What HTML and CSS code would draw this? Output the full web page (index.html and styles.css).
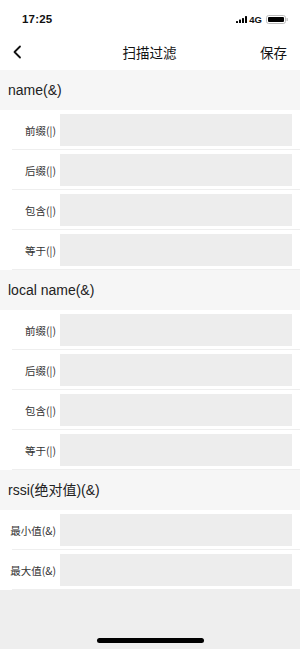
FILE: index.html
```html
<!DOCTYPE html>
<html lang="zh">
<head>
<meta charset="utf-8">
<title>扫描过滤</title>
<link rel="stylesheet" href="styles.css">
</head>
<body>
<div class="page">
  <div class="status">
    <span class="time">17:25</span>
    <span class="status-right">
      <svg class="signal" width="11" height="7" viewBox="0 0 11 7"><rect x="0" y="5" width="2" height="2" rx="0.5"/><rect x="3" y="3.5" width="2" height="3.5" rx="0.5"/><rect x="6" y="2" width="2" height="5" rx="0.5"/><rect x="9" y="0" width="2" height="7" rx="0.5"/></svg>
      <span class="net">4G</span>
      <svg class="battery" width="22" height="9" viewBox="0 0 22 9"><rect x="0.5" y="0.5" width="19" height="8" rx="2.2" fill="none" stroke="#bbb"/><rect x="2" y="2" width="16" height="5" rx="1" fill="#000"/><rect x="20.5" y="3" width="1.3" height="3" rx="0.6" fill="#bbb"/></svg>
    </span>
  </div>
  <div class="nav">
    <span class="back"><svg width="10" height="14" viewBox="0 0 10 14"><path d="M8 1.5 L2.5 7 L8 12.5" fill="none" stroke="#111" stroke-width="1.8" stroke-linecap="round" stroke-linejoin="round"/></svg></span>
    <span class="title">扫描过滤</span>
    <span class="save">保存</span>
  </div>

  <div class="section">name(&amp;)</div>
  <div class="row"><span class="label">前缀(|)</span><span class="field"></span></div>
  <div class="row"><span class="label">后缀(|)</span><span class="field"></span></div>
  <div class="row"><span class="label">包含(|)</span><span class="field"></span></div>
  <div class="row last"><span class="label">等于(|)</span><span class="field"></span></div>

  <div class="section">local name(&amp;)</div>
  <div class="row"><span class="label">前缀(|)</span><span class="field"></span></div>
  <div class="row"><span class="label">后缀(|)</span><span class="field"></span></div>
  <div class="row"><span class="label">包含(|)</span><span class="field"></span></div>
  <div class="row last"><span class="label">等于(|)</span><span class="field"></span></div>

  <div class="section">rssi(绝对值)(&amp;)</div>
  <div class="row"><span class="label">最小值(&amp;)</span><span class="field"></span></div>
  <div class="row"><span class="label">最大值(&amp;)</span><span class="field"></span></div>

  <div class="footer"><span class="home"></span></div>
</div>
</body>
</html>
```

FILE: styles.css
```css
* { box-sizing: border-box; }
html, body {
  margin: 0;
  padding: 0;
  background: #eeeeee;
}
body {
  font-family: "Liberation Sans", "Noto Sans CJK SC", sans-serif;
  color: #111;
}
.page {
  width: 300px;
  height: 649px;
  overflow: hidden;
  display: flex;
  flex-direction: column;
}
.status {
  height: 36px;
  background: #fff;
  display: flex;
  align-items: center;
  justify-content: space-between;
  padding: 2px 12px 0 22px;
}
.time {
  font-size: 11.5px;
  font-weight: 700;
  letter-spacing: 0.2px;
}
.status-right {
  display: flex;
  align-items: center;
  gap: 2px;
}
.signal { fill: #000; }
.net {
  font-size: 9.5px;
  font-weight: 700;
  margin-right: 2px;
}
.nav {
  height: 34px;
  background: #fff;
  display: grid;
  grid-template-columns: 60px 1fr 60px;
  align-items: center;
  padding: 0 13px 2px 12px;
}
.back { display: flex; align-items: center; }
.title {
  text-align: center;
  font-size: 13.5px;
  font-family: "Noto Sans CJK SC", sans-serif;
}
.save {
  text-align: right;
  font-size: 13.5px;
  font-family: "Noto Sans CJK SC", sans-serif;
}
.section {
  height: 40px;
  line-height: 40px;
  background: #f6f6f6;
  padding-left: 8px;
  font-size: 14px;
  color: #222;
  font-family: "Liberation Sans", "Noto Sans CJK SC", sans-serif;
}
.row {
  height: 40px;
  background: #fff;
  display: flex;
  align-items: center;
  padding: 0 8px 0 6px;
  position: relative;
}
.row::after {
  content: "";
  position: absolute;
  left: 12px;
  right: 0;
  bottom: 0;
  height: 1px;
  background: #eeeeee;
}
.label {
  width: 54px;
  padding-right: 4px;
  text-align: right;
  font-size: 10.5px;
  color: #333;
  white-space: nowrap;
  font-family: "Noto Sans CJK SC", sans-serif;
}
.field {
  flex: 1;
  height: 32px;
  margin-top: -1px;
  background: #ededed;
}
.footer {
  flex: 1;
  display: flex;
  justify-content: center;
  align-items: flex-end;
  padding-bottom: 6px;
}
.home {
  width: 107px;
  height: 5px;
  border-radius: 3px;
  background: #000;
}
```
